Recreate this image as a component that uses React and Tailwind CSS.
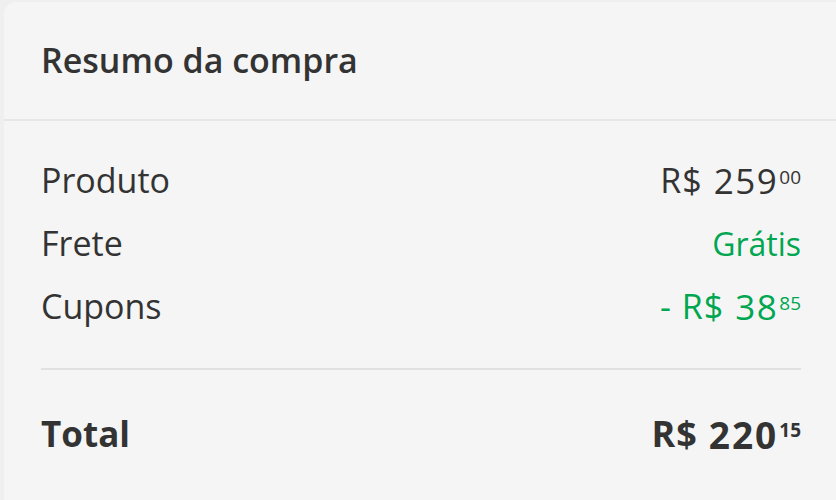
import React from "react";

const rows = [
  { label: "Produto", prefix: "R$", amount: "259", cents: "00", green: false },
  { label: "Frete", prefix: null, amount: "Grátis", cents: null, green: true },
  { label: "Cupons", prefix: "- R$", amount: "38", cents: "85", green: true },
];

const Price = ({ prefix, amount, cents, bold }) => (
  <span className="flex items-start leading-none">
    {prefix && <span className="mr-[11px] tracking-[1px]">{prefix}</span>}
    <span className={bold ? "text-[37px] tracking-[2px]" : "text-[35px] tracking-[1.5px]"}>{amount}</span>
    {cents && (
      <span className={`ml-[1px] mt-[5px] text-[19px] leading-none ${bold ? "font-bold" : ""}`}>{cents}</span>
    )}
  </span>
);

export default function App() {
  return (
    <div className="min-h-screen bg-[#efefef] pl-[4px] pt-[2px] font-['Open_Sans',sans-serif] text-[#333333]">
      <div className="rounded-[12px] bg-[#f5f5f5] h-[510px] w-[850px]">
        {/* header */}
        <div className="h-[119px] flex items-center px-[37px] border-b-2 border-[#e6e6e6]">
          <h2 className="text-[34px] font-semibold">Resumo da compra</h2>
        </div>

        <div className="pl-[37px] pr-[53px] pt-[28px]">
          {rows.map((row) => (
            <div key={row.label} className="h-[63px] flex items-center justify-between text-[34px]">
              <span>{row.label}</span>
              <span className={row.green ? "text-[#00a650]" : "text-[#333333]"}>
                {row.prefix ? (
                  <Price prefix={row.prefix} amount={row.amount} cents={row.cents} />
                ) : (
                  <span className="text-[32px]">{row.amount}</span>
                )}
              </span>
            </div>
          ))}

          <div className="mt-[30px] h-[2px] bg-[#e1e1e1]" />

          <div className="h-[128px] flex items-center justify-between text-[35px] font-bold">
            <span>Total</span>
            <span className="text-[36px]">
              <Price prefix="R$" amount="220" cents="15" bold />
            </span>
          </div>
        </div>
      </div>
    </div>
  );
}
